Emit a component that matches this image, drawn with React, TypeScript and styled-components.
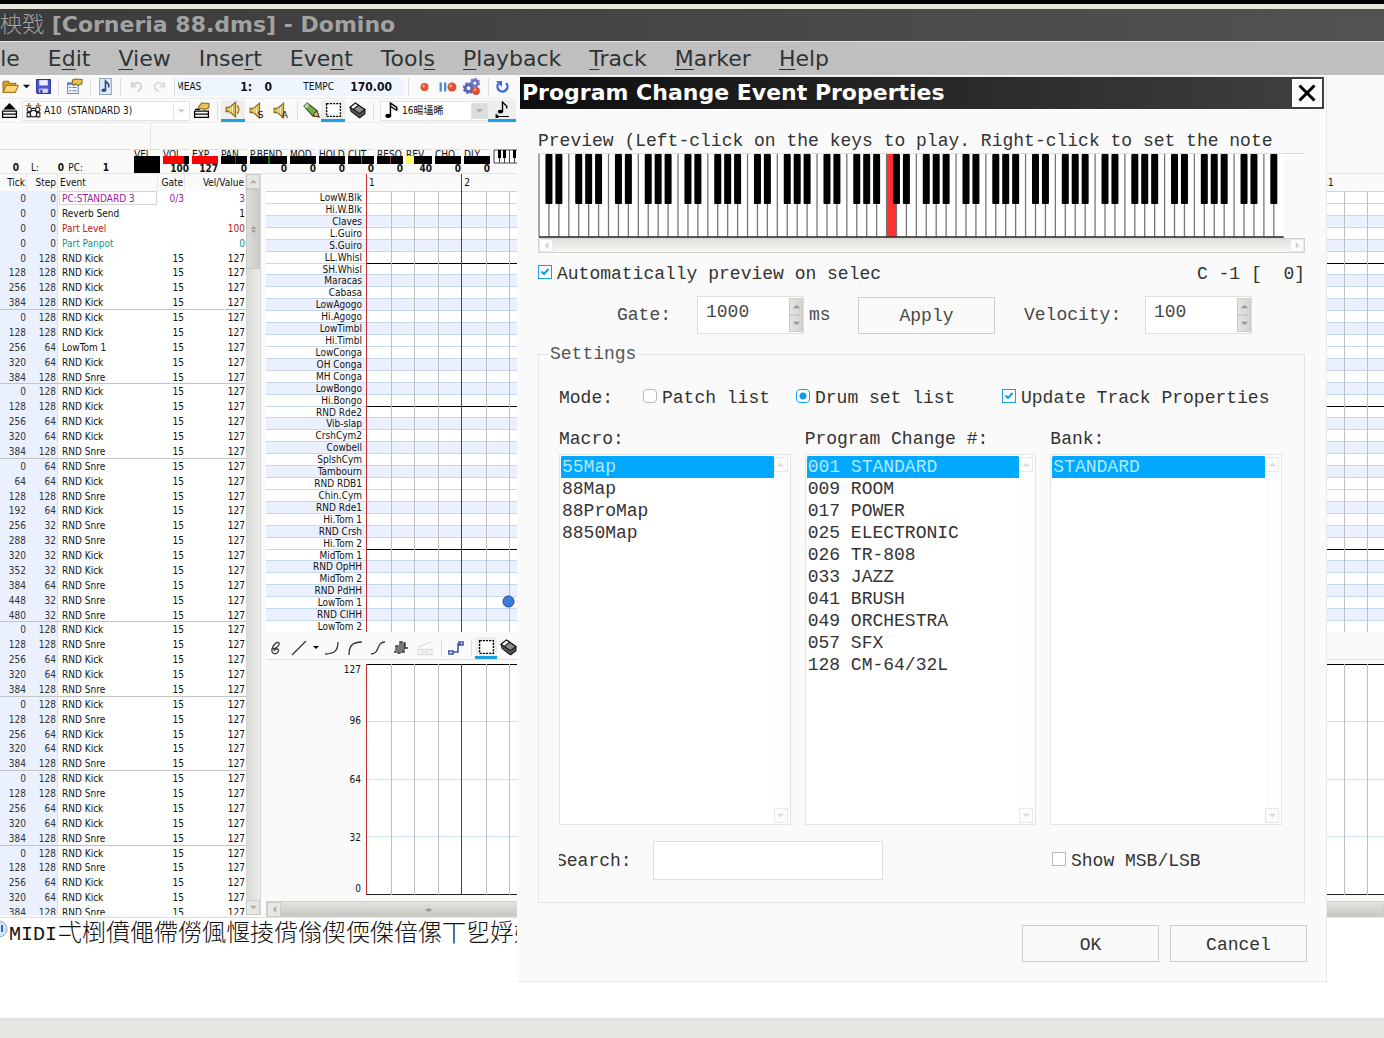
import React from "react";
import styled, { createGlobalStyle, css } from "styled-components";

const MONO = `"Liberation Mono", "Noto Sans CJK SC", monospace`;
const UI = `"DejaVu Sans Condensed", "DejaVu Sans", "Noto Sans CJK SC", sans-serif`;
const WIDE = `"DejaVu Sans", "Noto Sans CJK SC", sans-serif`;

const Global = createGlobalStyle`
  *, *::before, *::after { box-sizing: border-box; }
  body { margin: 0; background: #fff; overflow: hidden; }
  button, input, select { font: inherit; color: inherit; margin: 0; }
`;

/* ---------- application frame ---------- */

const Screen = styled.div`
  position: relative;
  display: flex;
  flex-direction: column;
  height: 100vh;
  overflow: hidden;
  background: #fafafa;
  color: #111;
  font: 10px/15px ${UI};
`;
const FrameTop = styled.div`
  height: 9px;
  flex: none;
  border-top: 4px solid #000;
  background: #e6e6de;
`;
const AppTitle = styled.h1`
  flex: none;
  margin: 0;
  height: 32px;
  overflow: hidden;
  background: linear-gradient(90deg, #3b3b3b, #525252);
  color: #a2a2a2;
  font: bold 22px/32px ${WIDE};
  white-space: pre;
`;
const Untitled = styled.span`
  font-weight: 300;
`;
const MenuBar = styled.nav`
  flex: none;
  display: flex;
  gap: 28px;
  height: 34px;
  padding-top: 1px;
  overflow: hidden;
  background: #bfbfbf;
  border-top: 1px solid #e4e4e4;
  color: #2e3436;
  font: 22px/32px ${WIDE};
`;
const MenuItem = styled.button<{ $cut?: boolean }>`
  flex: none;
  padding: 0;
  border: 0;
  background: none;
  ${(p) => p.$cut && "margin-left: -17px;"}
  u {
    text-decoration-thickness: 1px;
    text-underline-offset: 3px;
  }
`;

/* ---------- toolbars ---------- */

const Toolbar = styled.div<{ $tall?: boolean }>`
  flex: none;
  display: flex;
  align-items: center;
  width: 60%;
  height: ${(p) => (p.$tall ? 27 : 24)}px;
  padding-top: ${(p) => (p.$tall ? 4 : 0)}px;
  overflow: hidden;
  border-bottom: ${(p) => (p.$tall ? 0 : 1)}px solid #ececec;
`;
const Tool = styled.button<{ $w?: number; $on?: boolean }>`
  flex: none;
  display: flex;
  align-items: center;
  justify-content: center;
  width: ${(p) => p.$w ?? 24}px;
  height: 22px;
  padding: 0;
  border: 0;
  background: none;
  ${(p) =>
    p.$on &&
    css`
      background: #eee;
      border-bottom: 3px solid #1ba1e2;
    `}
`;
const Divider = styled.span`
  flex: none;
  width: 8px;
  height: 18px;
  background: linear-gradient(#ddd, #ddd) center / 1px 100% no-repeat;
`;
const Transport = styled.output`
  flex: none;
  display: grid;
  grid-template-columns: 26px 48px 20px 62px 1fr;
  align-items: center;
  width: 226px;
  height: 18px;
  background: #eef5ff;
  overflow: hidden;
  font: 10px/18px ${UI};
`;
const Caption = styled.span<{ $right?: boolean }>`
  overflow: hidden;
  text-indent: ${(p) => (p.$right ? 0 : -2)}px;
  text-align: ${(p) => (p.$right ? "right" : "left")};
`;
const Digits = styled.b`
  font: bold 12px/18px ${UI};
  text-align: right;
  padding-right: 12px;
  &:nth-child(-n + 3) {
    padding: 0;
  }
`;
const Combo = styled.label<{ $w: number; $shade?: boolean }>`
  flex: none;
  display: grid;
  grid-template-columns: 18px 1fr 16px;
  align-items: center;
  width: ${(p) => p.$w}px;
  height: 20px;
  margin-left: 3px;
  padding-left: 2px;
  border: 1px solid #e2e2e2;
  background: #fff;
  > svg:last-child {
    width: 16px;
    height: 16px;
    padding: 3px;
    background: ${(p) => (p.$shade ? "#dcdcdc" : "#fff")};
    border-left: 1px solid #e2e2e2;
  }
`;
const ComboSelect = styled.select`
  appearance: none;
  width: 100%;
  min-width: 0;
  padding: 0 1px;
  border: 0;
  background: none;
  white-space: pre;
`;
const Gutter = styled.div`
  flex: none;
  height: 26px;
  width: 151px;
  border-right: 1px solid #e4e4e4;
`;

/* ---------- channel parameters ---------- */

const Params = styled.div`
  flex: none;
  display: flex;
  gap: 3px;
  height: 25px;
  overflow: hidden;
  border-bottom: 1px solid #e4e4e4;
`;
const Locator = styled.div`
  flex: none;
  display: grid;
  grid-template-columns: 19px 20px 25px 19px 26px;
  align-items: end;
  width: 131px;
  border-top: 1px solid #ddd;
  line-height: 11px;
  text-align: right;
`;
const Param = styled.div<{ $w?: number }>`
  flex: none;
  display: grid;
  grid-template-rows: 7px 8px 10px;
  width: ${(p) => p.$w ?? 26}px;
`;
const ParamName = styled.span`
  overflow: hidden;
  border-top: 1px solid #ddd;
  line-height: 10px;
  white-space: nowrap;
`;
const Meter = styled.span<{ $fill: number; $from?: number; $ink?: string; $tall?: boolean }>`
  background: ${(p) => {
    const from = p.$from ?? 0;
    const ink = p.$ink ?? "#f00";
    return `linear-gradient(90deg, #000 ${from}%, ${ink} ${from}%, ${ink} ${from + p.$fill}%, #000 ${from + p.$fill}%)`;
  }};
  ${(p) => p.$tall && "grid-row: 2 / 4; margin-bottom: 1px;"}
`;
const ParamValue = styled.b`
  line-height: 9px;
  text-align: right;
`;

/* ---------- event list ---------- */

const Workspace = styled.main`
  flex: 1;
  min-height: 0;
  display: grid;
  grid-template-columns: 261px 1fr;
  gap: 5px;
`;
const ListPane = styled.section`
  display: grid;
  grid-template-columns: 1fr 15px;
  min-height: 0;
  margin-bottom: 2px;
  overflow: hidden;
  background: #fff;
`;
const EventTable = styled.table`
  display: flex;
  flex-direction: column;
  min-height: 0;
  margin-bottom: -5px;
  border-collapse: collapse;
  white-space: nowrap;
  thead {
    flex: none;
    background: #fafafa;
  }
  tbody {
    flex: 1;
    min-height: 0;
    display: grid;
    grid-auto-rows: minmax(0, 1fr);
  }
`;
const EventRow = styled.tr<{ $ink?: string; $first?: boolean }>`
  display: grid;
  grid-template-columns: 27px 31px 100px 27px 1fr;
  color: ${(p) => p.$ink ?? "#111"};
  ${(p) => p.$first && "box-shadow: 0 -1px #c4c4c4;"}
  th,
  td {
    padding: 0 1px 0 0;
    font-weight: normal;
    line-height: 15px;
    text-align: right;
  }
  th {
    line-height: 17px;
    height: 17px;
    border-right: 1px solid #e8e8e8;
  }
  td:nth-child(-n + 2) {
    background: #eaf0fe;
    color: #333;
  }
  td:nth-child(2) {
    border-right: 1px solid #d3e0f7;
  }
  > :nth-child(3) {
    text-align: left;
    padding-left: 4px;
  }
  th:nth-child(3) {
    padding-left: 2px;
  }
`;
const Focused = styled.span`
  display: block;
  height: 14px;
  margin: 0 0 0 -3px;
  padding-left: 2px;
  border: 1px solid #d5d5d5;
  line-height: 13px;
`;
const VScroll = styled.div`
  display: flex;
  flex-direction: column;
  background: linear-gradient(90deg, #d6d8d2, #ecede9);
  border-right: 1px solid #d8d8d8;
`;
const Thumb = styled.div`
  display: flex;
  align-items: center;
  justify-content: center;
  height: 80px;
  border: 1px solid #c6c8c2;
  background: linear-gradient(90deg, #dddfda, #c8cac4);
`;
const Arrow = styled.button<{ $pale?: boolean }>`
  flex: none;
  display: flex;
  align-items: center;
  justify-content: center;
  width: 14px;
  height: 15px;
  padding: 0;
  border: 1px solid ${(p) => (p.$pale ? "#e8e8e4" : "#ccccc6")};
  background: ${(p) => (p.$pale ? "#fcfcfc" : "#e6e7e3")};
`;
const Fill = styled.div`
  flex: 1;
`;

/* ---------- drum roll ---------- */

const RollPane = styled.section`
  display: grid;
  grid-template-rows: 17px 441px 27px 1fr 16px;
  min-width: 0;
  min-height: 0;
  overflow: hidden;
`;
const Lane = styled.div<{ $lined?: boolean }>`
  display: grid;
  grid-template: minmax(0, 1fr) / 100px minmax(0, 1fr);
  min-width: 0;
  min-height: 0;
  overflow: hidden;
  ${(p) => p.$lined && "border-top: 1px solid #e0e0e0; padding: 4px 0 6px;"}
`;
const Ruler = styled.div`
  display: flex;
  min-width: 0;
  overflow: hidden;
`;
const RulerBlock = styled.div`
  flex: none;
  display: grid;
  grid-template-columns: repeat(3, 1fr);
  width: 286px;
`;
const MeasureNo = styled.span<{ $ink: string }>`
  padding-left: 2px;
  border-left: 1px solid ${(p) => p.$ink};
  line-height: 18px;
`;
const Names = styled.div`
  display: grid;
  grid-auto-rows: minmax(0, 1fr);
  min-height: 0;
  background: #fff;
`;
const DrumName = styled.span<{ $dark: boolean }>`
  min-height: 0;
  padding-right: 4px;
  border-top: 1px solid #c3d8ec;
  background: ${(p) => (p.$dark ? "#eaf0fe" : "#fff")};
  line-height: 12px;
  text-align: right;
`;
const Field = styled.div`
  display: grid;
  grid-template: minmax(0, 1fr) / minmax(0, 1fr);
  min-width: 0;
  min-height: 0;
  overflow: hidden;
  background: #fff;
  > * {
    grid-area: 1 / 1;
  }
`;
const Stripes = styled.div`
  display: grid;
  grid-auto-rows: minmax(0, 1fr);
`;
const Stripe = styled.span<{ $dark: boolean; $octave: boolean }>`
  border-top: 1px solid ${(p) => (p.$octave ? "#000" : "#c3d8ec")};
  background: ${(p) => (p.$dark ? "#eaf0fe" : "#fff")};
`;
const Levels = styled.div`
  display: grid;
  grid-template-rows: 31fr 32fr 32fr 32fr;
  border-top: 1px solid #000;
  border-bottom: 1px solid #222;
  span + span {
    border-top: 1px solid #cfe2f0;
  }
`;
const LevelNames = styled.div`
  display: grid;
  grid-template-rows: 31fr 32fr 32fr 32fr;
  padding-right: 5px;
  text-align: right;
  line-height: 12px;
`;
const LevelName = styled.span<{ $ends?: boolean }>`
  display: flex;
  flex-direction: column;
  justify-content: space-between;
  margin-top: ${(p) => (p.$ends ? 0 : -5)}px;
`;
const Measure = styled.div<{ $ink: string }>`
  display: grid;
  grid-template-columns: repeat(4, 1fr);
  border-left: 1px solid ${(p) => p.$ink};
  span + span {
    border-left: 1px solid #c0c0c0;
  }
`;
const Note = styled.svg`
  position: absolute;
  left: 502px;
  top: 595px;
`;
const HScroll = styled.div`
  display: flex;
  align-items: center;
  border: 1px solid #cfd1ca;
  background: linear-gradient(#e2e4df, #c6c8c2);
`;
const Grip = styled.span`
  margin-left: 144px;
  color: #999;
  font-size: 8px;
`;
const Console = styled.section`
  flex: none;
  display: flex;
  height: 101px;
  border-top: 1px solid #e0e0e0;
  background: #fff;
  overflow: hidden;
  color: #111;
  font: 300 24px/34px ${MONO};
  white-space: nowrap;
`;
const ConsoleTag = styled.span`
  margin-right: 1px;
  font-size: 20px;
`;
const FrameBottom = styled.div`
  flex: none;
  height: 20px;
  border-top: 3px double #dcdcdc;
  background: #e7e8e4;
`;

/* ---------- dialog ---------- */

const Dialog = styled.section`
  position: absolute;
  left: 517px;
  top: 76px;
  width: 810px;
  padding: 0 2px 19px 3px;
  border: 1px solid #e9e9e7;
  border-left: 0;
  background: #fafafa;
  color: #333;
  font: 18px/22px ${MONO};
`;
const DialogTitle = styled.header`
  display: flex;
  align-items: center;
  justify-content: space-between;
  height: 32px;
  padding: 0 2px;
  background: linear-gradient(90deg, #0e0e0e, #404040);
  h2 {
    margin: 0;
    color: #fff;
    font: bold 22px/32px ${WIDE};
  }
`;
const Close = styled.button`
  display: flex;
  align-items: center;
  justify-content: center;
  width: 30px;
  height: 28px;
  padding: 0;
  border: 0;
  background: #fbfbfb;
`;
const DialogBody = styled.div`
  padding: 20px 19px 0 18px;
`;
const Hint = styled.p`
  margin: 0;
  height: 24px;
  padding-top: 1px;
  overflow: hidden;
  white-space: nowrap;
`;
const Keyboard = styled.svg`
  display: block;
  width: 100%;
  height: 85px;
  border-top: 1px solid #ddd;
`;
const PaleScroll = styled.div`
  display: flex;
  justify-content: space-between;
  height: 15px;
  border: 1px solid #d2d4cd;
  background: linear-gradient(#e0e1dc, #f6f6f4);
  > button {
    height: 13px;
  }
`;
const Line = styled.div`
  display: flex;
  justify-content: space-between;
  padding: 10px 0 0;
  white-space: pre;
`;
const Choice = styled.label`
  display: flex;
  align-items: center;
  gap: 5px;
`;
const Tick = styled.input`
  appearance: none;
  flex: none;
  width: 14px;
  height: 14px;
  margin: -4px 0 0 0;
  border: 1px solid #bbb;
  border-radius: ${(p) => (p.type === "radio" ? 4 : 0)}px;
  background: #fff center / 12px 12px no-repeat;
  &:checked {
    border-color: #1ba1e2;
  }
  &[type="radio"]:checked {
    background-image: radial-gradient(circle, #0a9cf0 3px, transparent 4px);
  }
`;
const TickBox = styled.span`
  display: grid;
  > * {
    grid-area: 1 / 1;
  }
  svg {
    margin: -2px 0 0 2px;
    pointer-events: none;
  }
`;
const Tuning = styled.div`
  display: grid;
  grid-template-columns: 80px 107px 54px 137px 29px 121px 107px;
  align-items: center;
  height: 38px;
  margin: 11px 0 0 79px;
  color: #484848;
`;
const Unit = styled.label`
  padding-left: 5px;
`;
const Spin = styled.div`
  display: grid;
  grid-template-columns: 1fr 14px;
  width: 107px;
  height: 38px;
  padding: 1px 0;
  border: 1px solid #e0e0e0;
  background: #fff;
  input {
    min-width: 0;
    height: 28px;
    padding: 0 8px;
    border: 0;
    background: none;
  }
  > div {
    display: grid;
    grid-template-rows: 1fr 1fr;
  }
  button {
    height: auto;
    background: linear-gradient(90deg, #e4e5e1, #d2d4ce);
  }
`;
const Push = styled.button`
  width: 137px;
  height: 37px;
  padding: 2px 0 0;
  border: 1px solid #cfcfcf;
  background: #fafafa;
`;
const Group = styled.fieldset`
  margin: 9px 0 0;
  padding: 22px 22px 23px 20px;
  border: 1px solid #e4e4e4;
  legend {
    margin-left: -11px;
    padding: 0 2px;
    color: #555;
  }
`;
const Modes = styled.div`
  display: grid;
  grid-template-columns: 84px 153px 206px 1fr;
  align-items: center;
  margin-bottom: 19px;
`;
const Lists = styled.div`
  display: grid;
  grid-template-columns: repeat(3, 1fr);
  gap: 14px;
`;
const ListCol = styled.div`
  label {
    display: block;
    height: 26px;
  }
`;
const ListFrame = styled.div`
  display: grid;
  grid-template-columns: 1fr 16px;
  height: 371px;
  padding: 1px 0 0 1px;
  border: 1px solid #e4e4e4;
  background: #fff;
`;
const ListBox = styled.select`
  appearance: none;
  width: 100%;
  height: 100%;
  padding: 0;
  border: 0;
  outline: 0;
  background: #fff;
  overflow: hidden;
  option {
    height: 22px;
    min-height: 22px;
    padding: 1px 1px 0;
    line-height: 21px;
  }
  option:checked {
    background: #00a8ff linear-gradient(#00a8ff, #00a8ff);
    color: #b5e8ff;
    -webkit-text-fill-color: #b5e8ff;
  }
`;
const ListScroll = styled.div`
  display: flex;
  flex-direction: column;
  justify-content: space-between;
  padding: 1px 0;
  background: #fdfdfd;
`;
const SearchRow = styled.div`
  display: grid;
  grid-template-columns: 94px 230px 169px 1fr;
  align-items: center;
  height: 38px;
  margin-top: 16px;
  > label:first-child {
    overflow: hidden;
    text-indent: -3px;
  }
`;
const SearchBox = styled.input`
  width: 230px;
  height: 39px;
  padding: 0 8px;
  border: 1px solid #e0e0e0;
  background: #fff;
`;
const Actions = styled.div`
  display: flex;
  justify-content: flex-end;
  gap: 11px;
  margin: 22px -2px 0 0;
`;

/* ---------- icons ---------- */

const Ico = ({ children, s = 17 }: { children: React.ReactNode; s?: number }) => (
  <svg width={s} height={s} viewBox="0 0 16 16" fill="none" aria-hidden="true">
    {children}
  </svg>
);
const Tri = ({ d = "down", c = "#b0b0ac" }: { d?: string; c?: string }) => {
  const pts: Record<string, string> = {
    down: "1,3 9,3 5,7",
    up: "1,7 9,7 5,3",
    left: "7,1 7,9 3,5",
    right: "3,1 3,9 7,5",
  };
  return (
    <svg width="9" height="9" viewBox="0 0 10 10" aria-hidden="true">
      <polygon points={pts[d]} fill={c} />
    </svg>
  );
};
const icons = {
  folder: (
    <Ico>
      <path d="M1 13V4l1-1h4l1 2h6v2" fill="#d9a334" stroke="#96691a" />
      <path d="M1 13.500 4 7h11.500l-3 6.500z" fill="#ffd873" stroke="#a8781f" />
    </Ico>
  ),
  save: (
    <Ico>
      <path d="M1.500 1.500h13v13h-12l-1-1z" fill="#4f57cf" stroke="#2d3392" />
      <path d="M4 2h8v5H4z" fill="#eef2ff" />
      <path d="M4 10h8v4H4z" fill="#d5daf0" />
      <path d="M5 11h2v3H5z" fill="#333a8c" />
    </Ico>
  ),
  props: (
    <Ico>
      <path d="M1.500 4.500h10v10h-10z" fill="#f5f8ff" stroke="#6f86ad" />
      <path d="M1.500 4.500h10v2h-10z" fill="#5886d0" />
      <path d="M3 9h2M3 12h2M6 9h4M6 12h4" stroke="#6c7ea0" />
      <path d="M6 5V2l3-1 6 .5v4L11 7 9 5.500 7 7z" fill="#e8c552" stroke="#866a1c" />
    </Ico>
  ),
  noteDoc: (
    <Ico>
      <path d="M2.500.5h11v15h-11z" fill="#dfeaf8" stroke="#90a2ba" />
      <path d="M8 11V3l3 3v3" stroke="#27477f" strokeWidth="1.500" />
      <ellipse cx="6.500" cy="11.500" rx="2.200" ry="1.700" fill="#27477f" />
    </Ico>
  ),
  undo: (
    <Ico s={15}>
      <path d="M3 3v5h5M3.500 7.500C6 3 12 3 13 7c.5 3-2 5-4 6" stroke="#d6d6d6" strokeWidth="2.200" />
    </Ico>
  ),
  redo: (
    <Ico s={15}>
      <path d="M13 3v5H8M12.500 7.500C10 3 4 3 3 7c-.5 3 2 5 4 6" stroke="#dedede" strokeWidth="2.200" />
    </Ico>
  ),
  rec: (
    <Ico s={16}>
      <circle cx="8.500" cy="8" r="4" fill="#e0512f" />
      <circle cx="7.500" cy="7" r="1.500" fill="#f7a184" />
    </Ico>
  ),
  pauseRec: (
    <Ico s={18}>
      <path d="M1.500 4v8M5.500 4v8" stroke="#4c86d8" strokeWidth="2" />
      <circle cx="11.500" cy="8" r="4" fill="#d9532f" />
      <circle cx="10.500" cy="7" r="1.400" fill="#f7a184" />
    </Ico>
  ),
  gears: (
    <Ico s={18}>
      <circle cx="5" cy="9" r="3" fill="#fff" stroke="#5a62b5" strokeWidth="2.600" />
      <circle cx="5" cy="9" r="4.600" stroke="#5a62b5" strokeWidth="1.400" strokeDasharray="2 1.600" />
      <circle cx="10.500" cy="4.500" r="2.500" fill="#fff" stroke="#6a72c5" strokeWidth="2.200" />
      <circle cx="10.500" cy="4.500" r="4" stroke="#6a72c5" strokeWidth="1.400" strokeDasharray="2 1.600" />
      <circle cx="11.500" cy="11.500" r="3.500" fill="#dc5230" />
      <circle cx="10.700" cy="10.500" r="1.200" fill="#f7a184" />
    </Ico>
  ),
  reload: (
    <Ico s={16}>
      <path d="M4.500 4.500A5 5 0 1 0 12 4" stroke="#3a6fd0" strokeWidth="2.400" />
      <path d="M2 2h6v6z" fill="#3a6fd0" />
    </Ico>
  ),
  stack: (
    <Ico s={17}>
      <path d="M8 1 14 7H2z" fill="#000" />
      <path d="M1 8.500h14M1 11.500h14M1 14.500h14M1.500 8v7M14.500 8v7" stroke="#000" strokeWidth="1.200" />
    </Ico>
  ),
  drums: (
    <Ico s={17}>
      <path d="M1 3.500h5M10 3.500h5M3.500 1v3M12.500 1v3" stroke="#a87722" strokeWidth="1.500" />
      <circle cx="4" cy="7" r="2" stroke="#222" />
      <circle cx="12" cy="7" r="2" stroke="#222" />
      <circle cx="8" cy="11" r="3" stroke="#111" />
      <path d="M2 10h3v4H2zM11 10h3v4h-3zM6 6h4" stroke="#222" />
    </Ico>
  ),
  stackProps: (
    <Ico s={17}>
      <path d="M5 5 8 1l7 .5v4L11 7 8 6 6 7z" fill="#e8c552" stroke="#866a1c" />
      <path d="M1 8.500h14M1 11.500h14M1 14.500h14M1.500 8v7M14.500 8v7M2 7h4" stroke="#000" strokeWidth="1.200" />
    </Ico>
  ),
  pencil: (
    <Ico s={17}>
      <path d="M1 4 4 1l9 7 2 6-6-1z" fill="#6fb04c" stroke="#2d4a1e" />
      <path d="M1 4 4 1l2 2-3 3z" fill="#b9d8a5" />
      <path d="m9 13 4-5 2 6z" fill="#e9c08a" stroke="#543b1c" />
    </Ico>
  ),
  marquee: (
    <Ico s={17}>
      <path d="M1.500 2.500h13v12h-13z" fill="#fff" stroke="#000" strokeWidth="1.300" strokeDasharray="2 1" />
    </Ico>
  ),
  eraser: (
    <Ico s={17}>
      <path d="M1 5 6 1l9 6v4l-5 4-8-6z" fill="#555" stroke="#111" />
      <path d="m1 5 5-4 9 6-5 4z" fill="#8a8a8a" stroke="#111" />
      <path d="m1 5 5-4 3 2-5 4z" fill="#fff" stroke="#111" />
    </Ico>
  ),
  note16: (
    <Ico s={17}>
      <path d="M7 13V1l6 4v3M7 4l6 4" stroke="#000" strokeWidth="1.400" />
      <ellipse cx="5" cy="13" rx="2.800" ry="2" fill="#000" />
    </Ico>
  ),
  noteSnap: (
    <Ico s={17}>
      <path d="M8 10V1l4 4v2" stroke="#000" strokeWidth="1.300" />
      <ellipse cx="6" cy="10" rx="2.500" ry="1.700" fill="#000" />
      <path d="M2 14.500h12M2 12v4M4 13l-2 1.500L4 16" stroke="#000" />
    </Ico>
  ),
};
const Speaker = ({ tag }: { tag?: string }) => (
  <Ico s={17}>
    <path d="M1 6h3l6-5v14l-6-5H1z" fill="#dfb84e" stroke="#8a6a1e" />
    <path d="M5 6v4M7 5v6" stroke="#fff0b8" />
    {tag ? (
      <text x="8" y="15" fontSize="9" fontFamily="DejaVu Sans" fill="#222">
        {tag}
      </text>
    ) : (
      <path d="M11.500 4q3 4 0 8" stroke="#a88428" strokeWidth="1.500" />
    )}
  </Ico>
);
const Stroke = ({ d, c = "#333", w = 1.3 }: { d: string; c?: string; w?: number }) => (
  <Ico s={16}>
    <path d={d} stroke={c} strokeWidth={w} />
  </Ico>
);

/* ---------- data ---------- */

type Ev = [number, number, string, string, string, string?];
const K = "RND Kick";
const S = "RND Snre";
const bar = (...n: [number, number, string][]): Ev[] => n.map(([t, s, e]) => [t, s, e, "15", "127"]);
const closing = bar([0, 128, K], [128, 128, S], [256, 64, K], [320, 64, K], [384, 128, S]);
const bars: Ev[][] = [
  [
    [0, 0, "PC:STANDARD 3", "0/3", "3", "#a11aa1"],
    [0, 0, "Reverb Send", "", "1"],
    [0, 0, "Part Level", "", "100", "#c01818"],
    [0, 0, "Part Panpot", "", "0", "#0f9488"],
    ...bar([0, 128, K], [128, 128, K], [256, 128, K], [384, 128, K]),
  ],
  bar([0, 128, K], [128, 128, K], [256, 64, "LowTom 1"], [320, 64, K], [384, 128, S]),
  bar([0, 128, K], [128, 128, K], [256, 64, K], [320, 64, K], [384, 128, S]),
  bar(
    [0, 64, S], [64, 64, K], [128, 128, S], [192, 64, K], [256, 32, S], [288, 32, S],
    [320, 32, K], [352, 32, K], [384, 64, S], [448, 32, S], [480, 32, S]
  ),
  closing,
  closing,
  closing,
  closing,
];
const drums =
  "LowW.Blk,Hi.W.Blk,Claves,L.Guiro,S.Guiro,LL.Whisl,SH.Whisl,Maracas,Cabasa,LowAgogo,Hi.Agogo,LowTimbl,Hi.Timbl,LowConga,OH Conga,MH Conga,LowBongo,Hi.Bongo,RND Rde2,Vib-slap,CrshCym2,Cowbell,SplshCym,Tambourn,RND RDB1,Chin.Cym,RND Rde1,Hi.Tom 1,RND Crsh,Hi.Tom 2,MidTom 1,RND OpHH,MidTom 2,RND PdHH,LowTom 1,RND ClHH,LowTom 2".split(",");
const isSharp = (i: number) => [1, 3, 5, 8, 10].includes((i + 6) % 12);
const params: { n: string; v?: string; w?: number; fill?: number; from?: number; ink?: string }[] = [
  { n: "VEL" },
  { n: "VOL", v: "100", fill: 79 },
  { n: "EXP", v: "127", fill: 100 },
  { n: "PAN", v: "0", fill: 4, from: 52, ink: "#345" },
  { n: "P.BEND", v: "0", w: 37, fill: 5, from: 50, ink: "#0a7a0a" },
  { n: "MOD", v: "0" },
  { n: "HOLD", v: "0" },
  { n: "CUT", v: "0", fill: 4, from: 50, ink: "#854" },
  { n: "RESO", v: "0", fill: 4, from: 50, ink: "#854" },
  { n: "REV", v: "40", fill: 31, ink: "#ffff66" },
  { n: "CHO", v: "0" },
  { n: "DLY", v: "0" },
];
const menus: [string, string, string][] = [
  ["", "F", "ile"], ["E", "d", "it"], ["", "V", "iew"], ["Inse", "r", "t"], ["Eve", "n", "t"],
  ["Tool", "s", ""], ["", "P", "layback"], ["", "T", "rack"], ["", "M", "arker"], ["", "H", "elp"],
];
const lists: { id: string; label: string; items: string[] }[] = [
  { id: "macro", label: "Macro:", items: ["55Map", "88Map", "88ProMap", "8850Map"] },
  {
    id: "program",
    label: "Program Change #:",
    items: [
      "001 STANDARD", "009 ROOM", "017 POWER", "025 ELECTRONIC", "026 TR-808",
      "033 JAZZ", "041 BRUSH", "049 ORCHESTRA", "057 SFX", "128 CM-64/32L",
    ],
  },
  { id: "bank", label: "Bank:", items: ["STANDARD"] },
];

/* ---------- composed parts ---------- */

const measureInk = (n: number) => (n === 0 ? "#c03030" : "#3c3c98");
const blocks = [0, 1, 2, 3, 4, 5];

const Columns = () => (
  <Ruler>
    {blocks.map((b) => (
      <RulerBlock key={b}>
        {[0, 1, 2].map((m) => (
          <Measure key={m} $ink={measureInk(b * 3 + m)}>
            <span />
            <span />
            <span />
            <span />
          </Measure>
        ))}
      </RulerBlock>
    ))}
  </Ruler>
);

const PianoKeys = () => {
  const pitch = 9.93;
  const at = (k: number) => 1 + k * pitch;
  const keys = Array.from({ length: 75 }, (_, k) => k);
  return (
    <Keyboard aria-label="Preview keyboard">
      <rect x="1" width={75 * pitch} height="83" fill="#fff" />
      <rect x={at(35)} width={pitch} height="83" fill="#ff3131" />
      {keys.map((k) => (
        <line key={k} x1={at(k)} x2={at(k)} y2="83" stroke="#777" strokeWidth="1.300" />
      ))}
      {keys
        .filter((k) => k > 0 && [1, 2, 4, 5, 6].includes(k % 7))
        .map((k) => (
          <rect key={k} x={at(k) - 3.5} width="7" height="50" rx="1" fill="#000" />
        ))}
      <line x1="1" x2={1 + 75 * pitch} y1="83" y2="83" stroke="#222" strokeWidth="1.500" />
    </Keyboard>
  );
};

const Checkbox = ({ on }: { on?: boolean }) => (
  <TickBox>
    <Tick type="checkbox" defaultChecked={on} />
    {on && (
      <svg width="10" height="10" viewBox="0 0 10 10" fill="none">
        <path d="M1.500 4.500 4 7l4.500-5" stroke="#1ba1e2" strokeWidth="2.200" />
      </svg>
    )}
  </TickBox>
);

const Spinner = ({ id, value }: { id: string; value: string }) => (
  <Spin>
    <input id={id} defaultValue={value} />
    <div>
      <Arrow aria-label="Increase">
        <Tri d="up" c="#999" />
      </Arrow>
      <Arrow aria-label="Decrease">
        <Tri c="#999" />
      </Arrow>
    </div>
  </Spin>
);

const PropertiesDialog = () => (
  <Dialog role="dialog" aria-labelledby="dialog-title">
    <DialogTitle>
      <h2 id="dialog-title">Program Change Event Properties</h2>
      <Close aria-label="Close">
        <svg width="20" height="20" viewBox="0 0 20 20">
          <path d="M2.500 2.500 17.500 17.500M17.500 2.500 2.500 17.500" stroke="#000" strokeWidth="3" />
        </svg>
      </Close>
    </DialogTitle>
    <DialogBody>
      <Hint>Preview (Left-click on the keys to play. Right-click to set the note</Hint>
      <PianoKeys />
      <PaleScroll>
        <Arrow $pale aria-label="Scroll left">
          <Tri d="left" c="#d2d2ce" />
        </Arrow>
        <Arrow $pale aria-label="Scroll right">
          <Tri d="right" c="#d2d2ce" />
        </Arrow>
      </PaleScroll>
      <Line>
        <Choice>
          <Checkbox on />
          Automatically preview on selec
        </Choice>
        <span>C -1 [  0]</span>
      </Line>
      <Tuning>
        <label htmlFor="gate">Gate:</label>
        <Spinner id="gate" value="1000" />
        <Unit htmlFor="gate">ms</Unit>
        <Push>Apply</Push>
        <span />
        <label htmlFor="velocity">Velocity:</label>
        <Spinner id="velocity" value="100" />
      </Tuning>
      <Group>
        <legend>Settings</legend>
        <Modes>
          <span>Mode:</span>
          <Choice>
            <Tick type="radio" name="mode" />
            Patch list
          </Choice>
          <Choice>
            <Tick type="radio" name="mode" defaultChecked />
            Drum set list
          </Choice>
          <Choice>
            <Checkbox on />
            Update Track Properties
          </Choice>
        </Modes>
        <Lists>
          {lists.map((l) => (
            <ListCol key={l.id}>
              <label htmlFor={l.id}>{l.label}</label>
              <ListFrame>
                <ListBox id={l.id} size={16} defaultValue={l.items[0]}>
                  {l.items.map((i) => (
                    <option key={i}>{i}</option>
                  ))}
                </ListBox>
                <ListScroll>
                  <Arrow $pale aria-label="Scroll up">
                    <Tri d="up" c="#d8d8d8" />
                  </Arrow>
                  <Arrow $pale aria-label="Scroll down">
                    <Tri c="#d8d8d8" />
                  </Arrow>
                </ListScroll>
              </ListFrame>
            </ListCol>
          ))}
        </Lists>
        <SearchRow>
          <label htmlFor="search">Search:</label>
          <SearchBox id="search" />
          <span />
          <Choice>
            <Checkbox />
            Show MSB/LSB
          </Choice>
        </SearchRow>
      </Group>
      <Actions>
        <Push>OK</Push>
        <Push>Cancel</Push>
      </Actions>
    </DialogBody>
  </Dialog>
);

const EventList = () => (
  <ListPane>
    <EventTable>
      <thead>
        <EventRow>
          <th>Tick</th>
          <th>Step</th>
          <th>Event</th>
          <th>Gate</th>
          <th>Vel/Value</th>
        </EventRow>
      </thead>
      <tbody>
        {bars.map((rows, b) =>
          rows.map(([tick, step, name, gate, value, ink], r) => (
            <EventRow key={`${b}-${r}`} $ink={ink} $first={b > 0 && r === 0}>
              <td>{tick}</td>
              <td>{step}</td>
              <td>{b === 0 && r === 0 ? <Focused>{name}</Focused> : name}</td>
              <td>{gate}</td>
              <td>{value}</td>
            </EventRow>
          ))
        )}
      </tbody>
    </EventTable>
    <VScroll>
      <Arrow aria-label="Scroll up">
        <Tri d="up" />
      </Arrow>
      <Thumb>
        <svg width="7" height="9" viewBox="0 0 7 9">
          <path d="M1 4 3.500 1 6 4zM1 5l2.500 3L6 5z" fill="#999" />
        </svg>
      </Thumb>
      <Fill />
      <Arrow aria-label="Scroll down">
        <Tri />
      </Arrow>
    </VScroll>
  </ListPane>
);

const Roll = () => (
  <RollPane>
    <Lane>
      <span />
      <Ruler>
        {blocks.map((b) => (
          <RulerBlock key={b}>
            {[0, 1, 2].map((m) => (
              <MeasureNo key={m} $ink={measureInk(b * 3 + m)}>
                {b * 3 + m + 1}
              </MeasureNo>
            ))}
          </RulerBlock>
        ))}
      </Ruler>
    </Lane>
    <Lane>
      <Names>
        {drums.map((d, i) => (
          <DrumName key={d} $dark={isSharp(i)}>
            {d}
          </DrumName>
        ))}
      </Names>
      <Field>
        <Stripes>
          {drums.map((d, i) => (
            <Stripe key={d} $dark={isSharp(i)} $octave={i > 0 && i % 12 === 6} />
          ))}
        </Stripes>
        <Columns />
      </Field>
    </Lane>
    <Toolbar $tall>
      <Tool $w={20}>
        <Stroke d="M5 9c4-1 7-4 6-6S5 4 4 9s4 6 6 3-2-5-4-1" />
      </Tool>
      <Tool $w={26}>
        <Stroke d="M1 15 15 1" />
      </Tool>
      <Tool $w={8}>
        <Tri c="#111" />
      </Tool>
      <Tool>
        <Stroke d="M1 14c9 0 13-3 13-12" />
      </Tool>
      <Tool $w={22}>
        <Stroke d="M2 15C2 5 6 2 15 2" />
      </Tool>
      <Tool>
        <Stroke d="M1 14c9 0 5-12 14-12" />
      </Tool>
      <Tool $w={22}>
        <Stroke d="M1 12h2V6h2v7h2V2h2v10h2V3h1v5h3" w={1.3} />
      </Tool>
      <Tool $w={25}>
        <Stroke d="M1 7 14 2M1 9.500h14v5H1zM4 12h8" c="#ddd" />
      </Tool>
      <Divider />
      <Tool $w={22}>
        <Stroke d="M0 11h5v3H1zM5 12h5V4h3M11 2h4v3h-4z" c="#3a55a8" w={1.6} />
      </Tool>
      <Divider />
      <Tool $w={22} $on>
        {icons.marquee}
      </Tool>
      <Tool $w={22}>{icons.eraser}</Tool>
    </Toolbar>
    <Lane $lined>
      <LevelNames>
        <LevelName $ends>127</LevelName>
        <LevelName>96</LevelName>
        <LevelName>64</LevelName>
        <LevelName>
          <span>32</span>
          <span>0</span>
        </LevelName>
      </LevelNames>
      <Field>
        <Levels>
          <span />
          <span />
          <span />
          <span />
        </Levels>
        <Columns />
      </Field>
    </Lane>
    <HScroll>
      <Arrow aria-label="Scroll left">
        <Tri d="left" />
      </Arrow>
      <Grip>◂▸</Grip>
    </HScroll>
  </RollPane>
);

export default function App() {
  return (
    <Screen>
      <Global />
      <FrameTop />
      <AppTitle>
        <Untitled>柍戣</Untitled> [Corneria 88.dms] - Domino
      </AppTitle>
      <MenuBar>
        {menus.map(([a, u, z], i) => (
          <MenuItem key={i} $cut={i === 0}>
            {a}
            <u>{u}</u>
            {z}
          </MenuItem>
        ))}
      </MenuBar>
      <Toolbar>
        <Tool $w={20}>{icons.folder}</Tool>
        <Tool $w={12}>
          <Tri c="#111" />
        </Tool>
        <Tool $w={22}>{icons.save}</Tool>
        <Divider />
        <Tool>{icons.props}</Tool>
        <Divider />
        <Tool $w={22}>{icons.noteDoc}</Tool>
        <Divider />
        <Tool>{icons.undo}</Tool>
        <Tool $w={22}>{icons.redo}</Tool>
        <Divider />
        <Transport>
          <Caption>MEAS</Caption>
          <Digits>1:</Digits>
          <Digits>0</Digits>
          <Caption $right>TEMPC</Caption>
          <Digits>170.00</Digits>
        </Transport>
        <Divider />
        <Tool>{icons.rec}</Tool>
        <Tool>{icons.pauseRec}</Tool>
        <Tool>{icons.gears}</Tool>
        <Divider />
        <Tool $w={20}>{icons.reload}</Tool>
      </Toolbar>
      <Toolbar>
        <Tool $w={19}>{icons.stack}</Tool>
        <Combo $w={168}>
          {icons.drums}
          <ComboSelect aria-label="Track">
            <option>A10&nbsp; (STANDARD 3)</option>
          </ComboSelect>
          <Tri c="#ccc" />
        </Combo>
        <Tool $w={23}>{icons.stackProps}</Tool>
        <Divider />
        <Tool $on>
          <Speaker />
        </Tool>
        <Tool>
          <Speaker tag="S" />
        </Tool>
        <Tool>
          <Speaker tag="A" />
        </Tool>
        <Divider />
        <Tool $w={20}>{icons.pencil}</Tool>
        <Tool $on>{icons.marquee}</Tool>
        <Tool>{icons.eraser}</Tool>
        <Divider />
        <Combo $w={108} $shade>
          {icons.note16}
          <ComboSelect aria-label="Quantize">
            <option>16暘壒晞</option>
          </ComboSelect>
          <Tri c="#aaa" />
        </Combo>
        <Tool $w={28} $on>
          {icons.noteSnap}
        </Tool>
      </Toolbar>
      <Gutter />
      <Params>
        <Locator>
          <b>0</b>
          <span>L:</span>
          <b>0</b>
          <span>PC:</span>
          <b>1</b>
        </Locator>
        {params.map((p) => (
          <Param key={p.n} $w={p.w}>
            <ParamName>{p.n}</ParamName>
            <Meter $fill={p.fill ?? 0} $from={p.from} $ink={p.ink} $tall={!p.v} />
            {p.v && <ParamValue>{p.v}</ParamValue>}
          </Param>
        ))}
        <svg width="28" height="16" viewBox="0 0 28 16">
          <path d="M1 1h27v13H1zM6.500 1v13M11.500 1v13M16.500 1v13M21.500 1v13M26.500 1v13" fill="#fff" stroke="#444" />
          <path d="M5 1h3v8H5zM10 1h3v8h-3zM20 1h3v8h-3zM25 1h3v8h-3z" fill="#000" />
        </svg>
      </Params>
      <Workspace>
        <EventList />
        <Roll />
      </Workspace>
      <Note width="13" height="13" viewBox="0 0 13 13">
        <circle cx="6.500" cy="6.500" r="5.500" fill="#3d7de0" stroke="#1c3f9c" />
      </Note>
      <Console>
        <svg width="9" height="32" viewBox="0 0 9 32">
          <circle cx="-1" cy="11" r="8" fill="#d5e6f7" stroke="#8fa9c6" />
          <path d="M2 7v7" stroke="#2a6cc8" strokeWidth="2" />
        </svg>
        <ConsoleTag>MIDI</ConsoleTag>
        弌椡僨僶僀僗偑愝掕偝傟偰偄傑偣傫丅乮娐嫬
      </Console>
      <FrameBottom />
      <PropertiesDialog />
    </Screen>
  );
}
